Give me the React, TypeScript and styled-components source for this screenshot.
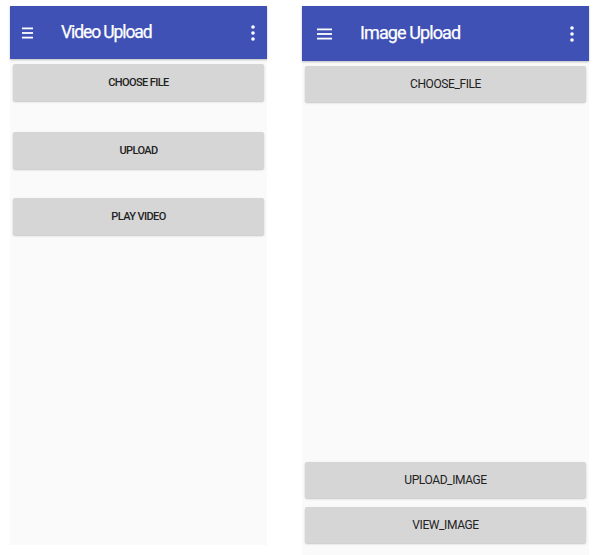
import React, { FC } from "react";
import styled, { createGlobalStyle } from "styled-components";

const GlobalStyle = createGlobalStyle`
  html, body {
    margin: 0;
    padding: 0;
    background: #ffffff;
    font-family: Roboto, "Noto Sans", Arial, sans-serif;
  }
`;

interface ScreenProps {
  $width: number;
  $height: number;
}

const Page = styled.div`
  display: flex;
  align-items: flex-start;
  gap: 35px;
  padding: 6px 0 0 10px;
  width: 604px;
  height: 555px;
  box-sizing: border-box;
`;

const Screen = styled.div<ScreenProps>`
  width: ${(p) => p.$width}px;
  height: ${(p) => p.$height}px;
  background: #fafafa;
  display: flex;
  flex-direction: column;
`;

const AppBar = styled.div<{ $height: number; $pad: number }>`
  height: ${(p) => p.$height}px;
  flex-shrink: 0;
  background: #3f51b5;
  display: flex;
  align-items: center;
  padding: 0 ${(p) => p.$pad}px;
  box-shadow: 0 1px 2px rgba(0, 0, 0, 0.25);
  color: #fff;
`;

const Title = styled.div<{ $condensed?: boolean }>`
  flex: 1;
  font-size: ${(p) => (p.$condensed ? "17.5px" : "18px")};
  font-weight: 400;
  letter-spacing: ${(p) => (p.$condensed ? "-1.1px" : "-0.9px")};
  margin-left: 28px;
  margin-top: -2px;
  -webkit-text-stroke: 0.25px #fff;
`;

const Body = styled.div<{ $inset: number; $bottom: number }>`
  flex: 1;
  display: flex;
  flex-direction: column;
  padding: 5px ${(p) => p.$inset}px ${(p) => p.$bottom}px;
`;

const Button = styled.div<{ $condensed?: boolean; $gap?: number }>`
  height: ${(p) => (p.$condensed ? 37 : 36)}px;
  margin-top: ${(p) => p.$gap ?? 0}px;
  background: #d6d6d6;
  border-radius: 2px;
  box-shadow: 0 1px 2px rgba(0, 0, 0, 0.22);
  display: flex;
  align-items: center;
  justify-content: center;
  font-size: ${(p) => (p.$condensed ? "11px" : "12px")};
  font-weight: ${(p) => (p.$condensed ? 500 : 400)};
  letter-spacing: ${(p) => (p.$condensed ? "-0.6px" : "-0.4px")};
  color: #222;
`;

const Spacer = styled.div`
  flex: 1;
`;

const Menu: FC<{ width: number }> = ({ width }) => (
  <svg width={width} height="12" viewBox={`0 0 ${width} 12`}>
    <rect x="0" y="0.5" width={width} height="1.8" fill="#fff" />
    <rect x="0" y="5.1" width={width} height="1.8" fill="#fff" />
    <rect x="0" y="9.7" width={width} height="1.8" fill="#fff" />
  </svg>
);

const Kebab: FC = () => (
  <svg width="4" height="16" viewBox="0 0 4 16">
    <circle cx="2" cy="2" r="1.8" fill="#fff" />
    <circle cx="2" cy="8" r="1.8" fill="#fff" />
    <circle cx="2" cy="14" r="1.8" fill="#fff" />
  </svg>
);

const App: FC = () => (
  <>
    <GlobalStyle />
    <Page>
      <Screen $width={257} $height={539}>
        <AppBar $height={53} $pad={12}>
          <Menu width={11} />
          <Title $condensed>Video Upload</Title>
          <Kebab />
        </AppBar>
        <Body $inset={3} $bottom={7}>
          <Button $condensed>CHOOSE FILE</Button>
          <Button $condensed $gap={31}>
            UPLOAD
          </Button>
          <Button $condensed $gap={29}>
            PLAY VIDEO
          </Button>
        </Body>
      </Screen>
      <Screen $width={287} $height={549}>
        <AppBar $height={55} $pad={15}>
          <Menu width={15} />
          <Title>Image Upload</Title>
          <Kebab />
        </AppBar>
        <Body $inset={3} $bottom={12}>
          <Button>CHOOSE_FILE</Button>
          <Spacer />
          <Button>UPLOAD_IMAGE</Button>
          <Button $gap={9}>VIEW_IMAGE</Button>
        </Body>
      </Screen>
    </Page>
  </>
);

export default App;
